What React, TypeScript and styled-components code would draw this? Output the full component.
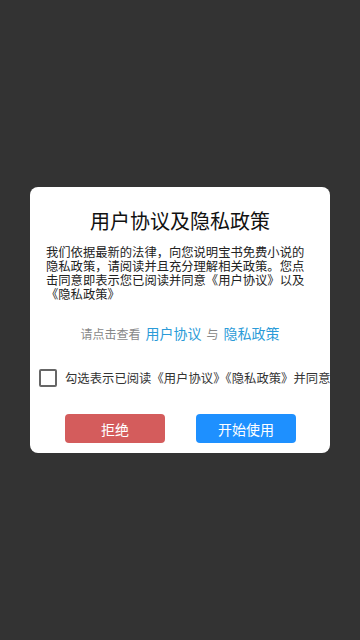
import React from "react";
import styled, { createGlobalStyle } from "styled-components";

const GlobalStyle = createGlobalStyle`
  html, body {
    margin: 0;
    padding: 0;
    background: #333333;
  }
  body {
    font-family: "Noto Sans CJK SC", "Noto Sans", sans-serif;
  }
`;

const Screen = styled.div`
  width: 360px;
  height: 640px;
  display: flex;
  align-items: center;
  justify-content: center;
  background: #333333;
`;

const Dialog = styled.div`
  width: 300px;
  height: 266px;
  box-sizing: border-box;
  background: #ffffff;
  border-radius: 8px;
  display: flex;
  flex-direction: column;
  padding-top: 20px;
  overflow: hidden;
`;

const Title = styled.h2`
  margin: 0;
  font-size: 20px;
  font-weight: 400;
  line-height: 28px;
  color: #111111;
  text-align: center;
`;

const Body = styled.p`
  margin: 10px 0 0;
  padding: 0 16px;
  font-size: 12.3px;
  line-height: 14px;
  color: #222222;
`;

const LinkRow = styled.div`
  margin-top: 22px;
  display: flex;
  align-items: baseline;
  justify-content: center;
  gap: 5px;
  height: 20px;
`;

const Hint = styled.span`
  font-size: 12px;
  color: #888888;
`;

const Link = styled.a`
  font-size: 14px;
  color: #2b9bd8;
  text-decoration: none;
`;

const CheckRow = styled.label`
  margin-top: 26px;
  display: flex;
  align-items: center;
  gap: 8px;
  padding-left: 9px;
  white-space: nowrap;
`;

const Box = styled.span`
  width: 18px;
  height: 18px;
  box-sizing: border-box;
  border: 2px solid #666666;
  border-radius: 2px;
  flex-shrink: 0;
`;

const CheckText = styled.span`
  font-size: 12.3px;
  letter-spacing: 0.05px;
  color: #333333;
`;

const Buttons = styled.div`
  margin-top: 27px;
  display: flex;
  justify-content: center;
  gap: 31px;
  padding-left: 1px;
`;

const Button = styled.button<{ $tone: "red" | "blue" }>`
  width: 100px;
  height: 29px;
  border: none;
  border-radius: 4px;
  font-family: inherit;
  font-size: 14px;
  color: #ffffff;
  background: ${(p) => (p.$tone === "red" ? "#d45c5c" : "#1e90ff")};
  padding: 0;
`;

export default function App() {
  return (
    <>
      <GlobalStyle />
      <Screen>
        <Dialog>
          <Title>用户协议及隐私政策</Title>
          <Body>
            我们依据最新的法律，向您说明宝书免费小说的隐私政策，请阅读并且充分理解相关政策。您点击同意即表示您已阅读并同意《用户协议》以及《隐私政策》
          </Body>
          <LinkRow>
            <Hint>请点击查看</Hint>
            <Link>用户协议</Link>
            <Hint>与</Hint>
            <Link>隐私政策</Link>
          </LinkRow>
          <CheckRow>
            <Box />
            <CheckText>勾选表示已阅读《用户协议》《隐私政策》并同意</CheckText>
          </CheckRow>
          <Buttons>
            <Button $tone="red">拒绝</Button>
            <Button $tone="blue">开始使用</Button>
          </Buttons>
        </Dialog>
      </Screen>
    </>
  );
}
